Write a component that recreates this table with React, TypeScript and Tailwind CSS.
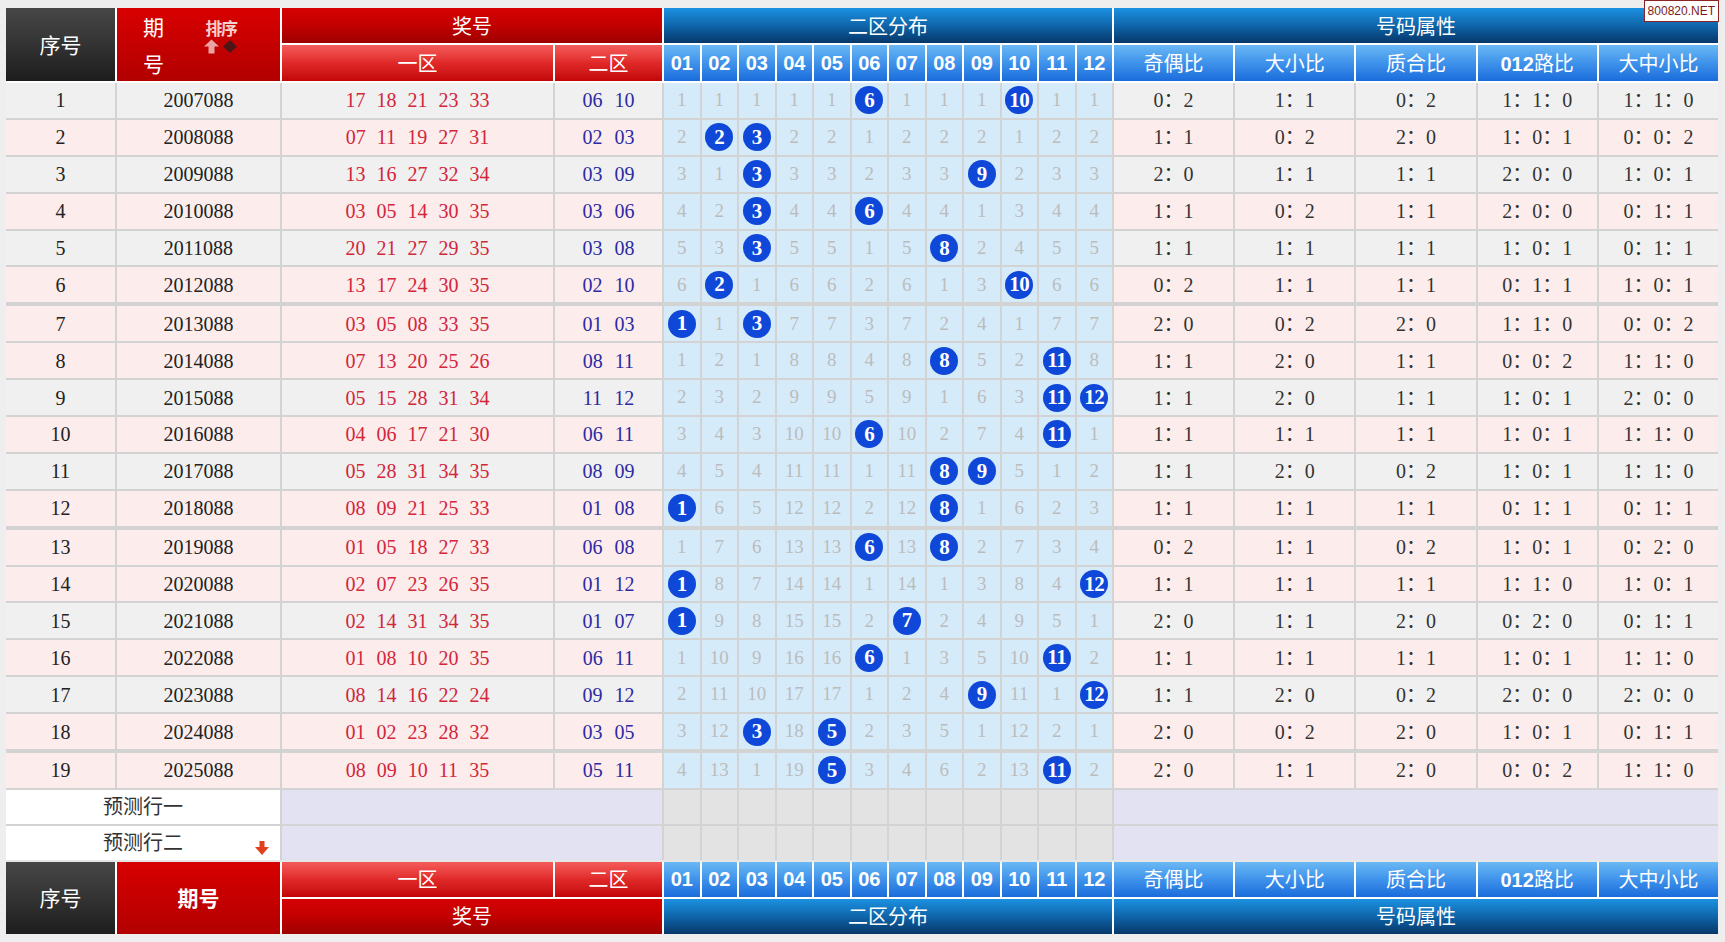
import React from "react";

const GRID =
  "grid grid-cols-[109px_163px_271px_107px_repeat(12,35.5px)_repeat(5,minmax(0,1fr))] gap-x-[2px]";

const SERIF = "font-['Liberation_Serif','Noto_Sans_CJK_SC',serif]";
const CJK = "font-['Noto_Sans_CJK_SC',sans-serif]";
const ARIAL = "font-['Liberation_Sans','Noto_Sans_CJK_SC',sans-serif]";

const DARK = "bg-linear-to-b from-[#474747] via-[#333333] to-[#1d1d1d]";
const RED = "bg-linear-to-b from-[#d80000] to-[#b20000]";
const RED_DARK = "bg-linear-to-b from-[#d60202] via-[#c20000] to-[#9e0000]";
const RED_LIGHT = "bg-linear-to-b from-[#f45a5a] via-[#e02828] to-[#c20404]";
const BLUE_DARK = "bg-linear-to-b from-[#1b91e2] via-[#0f66aa] to-[#06376a]";
const BLUE_LIGHT = "bg-linear-to-b from-[#6ab8f5] via-[#3f92ea] to-[#1a6cdc]";

type Row = {
  issue: string;
  a: string;
  b: string;
  dist: string;
  attrs: string;
  pink: boolean;
};

const RAW: [string, string, string, string, string, boolean][] = [
  ["2007088", "17 18 21 23 33", "06 10", "1 1 1 1 1 0 1 1 1 0 1 1", "02 11 02 110 110", false],
  ["2008088", "07 11 19 27 31", "02 03", "2 0 0 2 2 1 2 2 2 1 2 2", "11 02 20 101 002", true],
  ["2009088", "13 16 27 32 34", "03 09", "3 1 0 3 3 2 3 3 0 2 3 3", "20 11 11 200 101", false],
  ["2010088", "03 05 14 30 35", "03 06", "4 2 0 4 4 0 4 4 1 3 4 4", "11 02 11 200 011", true],
  ["2011088", "20 21 27 29 35", "03 08", "5 3 0 5 5 1 5 0 2 4 5 5", "11 11 11 101 011", false],
  ["2012088", "13 17 24 30 35", "02 10", "6 0 1 6 6 2 6 1 3 0 6 6", "02 11 11 011 101", true],
  ["2013088", "03 05 08 33 35", "01 03", "0 1 0 7 7 3 7 2 4 1 7 7", "20 02 20 110 002", true],
  ["2014088", "07 13 20 25 26", "08 11", "1 2 1 8 8 4 8 0 5 2 0 8", "11 20 11 002 110", true],
  ["2015088", "05 15 28 31 34", "11 12", "2 3 2 9 9 5 9 1 6 3 0 0", "11 20 11 101 200", false],
  ["2016088", "04 06 17 21 30", "06 11", "3 4 3 10 10 0 10 2 7 4 0 1", "11 11 11 101 110", true],
  ["2017088", "05 28 31 34 35", "08 09", "4 5 4 11 11 1 11 0 0 5 1 2", "11 20 02 101 110", false],
  ["2018088", "08 09 21 25 33", "01 08", "0 6 5 12 12 2 12 0 1 6 2 3", "11 11 11 011 011", true],
  ["2019088", "01 05 18 27 33", "06 08", "1 7 6 13 13 0 13 0 2 7 3 4", "02 11 02 101 020", true],
  ["2020088", "02 07 23 26 35", "01 12", "0 8 7 14 14 1 14 1 3 8 4 0", "11 11 11 110 101", true],
  ["2021088", "02 14 31 34 35", "01 07", "0 9 8 15 15 2 0 2 4 9 5 1", "20 11 20 020 011", false],
  ["2022088", "01 08 10 20 35", "06 11", "1 10 9 16 16 0 1 3 5 10 0 2", "11 11 11 101 110", true],
  ["2023088", "08 14 16 22 24", "09 12", "2 11 10 17 17 1 2 4 0 11 1 0", "11 20 02 200 200", false],
  ["2024088", "01 02 23 28 32", "03 05", "3 12 0 18 0 2 3 5 1 12 2 1", "20 02 20 101 011", true],
  ["2025088", "08 09 10 11 35", "05 11", "4 13 1 19 0 3 4 6 2 13 0 2", "20 11 20 002 110", true],
];

const ROWS: Row[] = RAW.map(([issue, a, b, dist, attrs, pink]) => ({ issue, a, b, dist, attrs, pink }));

const NUMS = ["01", "02", "03", "04", "05", "06", "07", "08", "09", "10", "11", "12"];
const ATTRS = ["奇偶比", "大小比", "质合比", "012路比", "大中小比"];

function AttrHead({ label }: { label: string }) {
  if (label === "012路比") {
    return (
      <span className="flex items-baseline">
        <span className={`${ARIAL} font-bold text-[20px]`}>012</span>
        <span className={`${CJK} text-[20px]`}>路比</span>
      </span>
    );
  }
  return <span className={`${CJK} text-[20px]`}>{label}</span>;
}

function HeadCell({ cls, children }: { cls: string; children?: React.ReactNode }) {
  return <div className={`flex items-center justify-center text-white ${cls}`}>{children}</div>;
}

function SortIcon() {
  return (
    <div className="flex flex-col items-center pt-[11px] ml-[40px]">
      <span className={`${CJK} text-[17px] leading-[17px] font-bold tracking-[-1.5px] text-[#f7cfcf]`}>排序</span>
      <svg width="34" height="15" viewBox="0 0 34 15" className="mt-[3px]">
        <path d="M7.5 0.5 L15 7.5 L10.5 7.5 L10.5 14.5 L4.5 14.5 L4.5 7.5 L0 7.5 Z" fill="#eaa4a4" />
        <path d="M26 1 L33 7.5 L26 14 L19 7.5 Z" fill="#4d1616" />
      </svg>
    </div>
  );
}

function Ball({ n }: { n: number }) {
  return (
    <div
      className={`w-[28px] h-[28px] rounded-full bg-[#0f47d8] text-white flex items-center justify-center ${SERIF} font-bold text-[21px] leading-none tracking-[-0.5px]`}
    >
      {n}
    </div>
  );
}

function ratio(s: string) {
  return s.split("").join("：");
}

function DataRow({ row, idx, sep }: { row: Row; idx: number; sep: boolean }) {
  const bg = row.pink ? "bg-[#fcecec]" : "bg-[#f0f0f0]";
  const hits = row.b.split(" ").map(Number);
  const dist = row.dist.split(" ");
  return (
    <div className={`${GRID} h-[34.9px] ${sep ? "mt-[2px]" : ""} ${SERIF} text-[20px]`}>
      <div className={`${bg} flex items-center justify-center text-[#222]`}>{idx}</div>
      <div className={`${bg} flex items-center justify-center text-[#222]`}>{row.issue}</div>
      <div className={`${bg} flex items-center justify-center gap-[11px] text-[#d3263b]`}>
        {row.a.split(" ").map((n, i) => (
          <span key={i}>{n}</span>
        ))}
      </div>
      <div className={`${bg} flex items-center justify-center gap-[12px] text-[#2b2ba3]`}>
        {row.b.split(" ").map((n, i) => (
          <span key={i}>{n}</span>
        ))}
      </div>
      {dist.map((d, i) => (
        <div key={i} className="bg-[#d5ebfa] flex items-center justify-center text-[19px] text-[#bcbcbc]">
          {hits.includes(i + 1) ? <Ball n={i + 1} /> : d}
        </div>
      ))}
      {row.attrs.split(" ").map((t, i) => (
        <div key={i} className={`${bg} flex items-center justify-center text-[#333]`}>
          {ratio(t)}
        </div>
      ))}
    </div>
  );
}

function PredictRow({ label, arrow }: { label: string; arrow?: boolean }) {
  return (
    <div className={`${GRID} h-[34px]`}>
      <div className={`col-span-2 relative bg-white flex items-center justify-center ${SERIF} text-[20px] text-[#333]`}>
        {label}
        {arrow && (
          <svg width="16" height="14" viewBox="0 0 16 14" className="absolute right-[10px] bottom-[5px]">
            <path d="M5.5 0 H10.5 V6 H15 L8 14 L1 6 H5.5 Z" fill="#e2401c" />
          </svg>
        )}
      </div>
      <div className="col-span-2 bg-[#e2e2f3]" />
      {NUMS.map((n) => (
        <div key={n} className="bg-[#e3e3e3]" />
      ))}
      <div className="col-span-5 bg-[#e2e2f3]" />
    </div>
  );
}

export default function App() {
  return (
    <div className="relative min-h-[942px] w-[1725px] bg-[#eeeeee] pt-[8px]">
      <div className="ml-[6px] w-[1712px] bg-white flex flex-col">
        {/* header */}
        <div className={`${GRID} grid-rows-[35px_36px] gap-y-[2px]`}>
          <HeadCell cls={`row-span-2 ${DARK}`}>
            <span className={`${CJK} text-[21px]`}>序号</span>
          </HeadCell>
          <div className={`row-span-2 ${RED} flex items-start pl-[26px] text-white`}>
            <div className={`${CJK} flex flex-col gap-[13px] pt-[6px] text-[21px] leading-[24px]`}>
              <span>期</span>
              <span>号</span>
            </div>
            <SortIcon />
          </div>
          <HeadCell cls={`col-span-2 ${RED_DARK}`}>
            <span className={`${CJK} text-[20px]`}>奖号</span>
          </HeadCell>
          <HeadCell cls={`col-span-12 ${BLUE_DARK}`}>
            <span className={`${CJK} text-[20px]`}>二区分布</span>
          </HeadCell>
          <HeadCell cls={`col-span-5 ${BLUE_DARK}`}>
            <span className={`${CJK} text-[20px]`}>号码属性</span>
          </HeadCell>
          <HeadCell cls={RED_LIGHT}>
            <span className={`${CJK} text-[20px]`}>一区</span>
          </HeadCell>
          <HeadCell cls={RED_LIGHT}>
            <span className={`${CJK} text-[20px]`}>二区</span>
          </HeadCell>
          {NUMS.map((n) => (
            <HeadCell key={n} cls={BLUE_LIGHT}>
              <span className={`${ARIAL} font-bold text-[20px]`}>{n}</span>
            </HeadCell>
          ))}
          {ATTRS.map((a) => (
            <HeadCell key={a} cls={BLUE_LIGHT}>
              <AttrHead label={a} />
            </HeadCell>
          ))}
        </div>

        <div className="h-[2px] bg-white" />

        {/* body */}
        <div className="flex flex-col gap-[2px] bg-[#d3d3d3]">
          {ROWS.map((r, i) => (
            <DataRow key={r.issue} row={r} idx={i + 1} sep={i > 0 && i % 6 === 0} />
          ))}
          <PredictRow label="预测行一" />
          <PredictRow label="预测行二" arrow />
        </div>

        <div className="h-[2px] bg-[#e6e6e6]" />

        {/* footer */}
        <div className={`${GRID} grid-rows-[35px_35px] gap-y-[2px]`}>
          <HeadCell cls={`row-span-2 ${DARK}`}>
            <span className={`${CJK} text-[21px]`}>序号</span>
          </HeadCell>
          <HeadCell cls={`row-span-2 ${RED}`}>
            <span className={`${CJK} text-[21px] font-bold`}>期号</span>
          </HeadCell>
          <HeadCell cls={RED_LIGHT}>
            <span className={`${CJK} text-[20px]`}>一区</span>
          </HeadCell>
          <HeadCell cls={RED_LIGHT}>
            <span className={`${CJK} text-[20px]`}>二区</span>
          </HeadCell>
          {NUMS.map((n) => (
            <HeadCell key={n} cls={BLUE_LIGHT}>
              <span className={`${ARIAL} font-bold text-[20px]`}>{n}</span>
            </HeadCell>
          ))}
          {ATTRS.map((a) => (
            <HeadCell key={a} cls={BLUE_LIGHT}>
              <AttrHead label={a} />
            </HeadCell>
          ))}
          <HeadCell cls={`col-span-2 ${RED_DARK}`}>
            <span className={`${CJK} text-[20px]`}>奖号</span>
          </HeadCell>
          <HeadCell cls={`col-span-12 ${BLUE_DARK}`}>
            <span className={`${CJK} text-[20px]`}>二区分布</span>
          </HeadCell>
          <HeadCell cls={`col-span-5 ${BLUE_DARK}`}>
            <span className={`${CJK} text-[20px]`}>号码属性</span>
          </HeadCell>
        </div>
      </div>

      {/* watermark badge */}
      <div
        className={`absolute top-0 right-[6px] h-[22px] px-[3px] flex items-center bg-white border border-[#8c2323] ${ARIAL} text-[12px] text-[#7a1a1a]`}
      >
        800820.NET
      </div>
    </div>
  );
}
